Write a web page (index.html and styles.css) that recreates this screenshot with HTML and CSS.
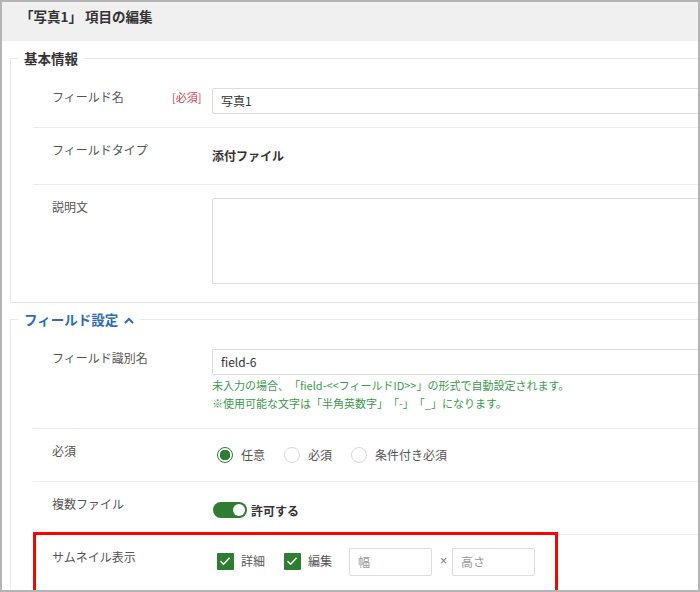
FILE: index.html
```html
<!DOCTYPE html>
<html lang="ja">
<head>
<meta charset="utf-8">
<title>「写真1」 項目の編集</title>
<link rel="stylesheet" href="styles.css">
</head>
<body>
<div class="frame">
  <div class="header">「写真1」 項目の編集</div>

  <fieldset class="group">
    <legend class="legend">基本情報</legend>
    <div class="row">
      <div class="label"><span class="label-text">フィールド名</span><span class="req">[必須]</span></div>
      <div class="control"><div class="input wide">写真1</div></div>
    </div>
    <div class="row">
      <div class="label"><span class="label-text">フィールドタイプ</span></div>
      <div class="control"><div class="static">添付ファイル</div></div>
    </div>
    <div class="row last">
      <div class="label"><span class="label-text">説明文</span></div>
      <div class="control"><div class="textarea"></div></div>
    </div>
  </fieldset>

  <fieldset class="group second">
    <legend class="legend blue">フィールド設定
      <svg class="chev" width="10" height="7" viewBox="0 0 10 7"><path d="M1 6 L5 2 L9 6" fill="none" stroke="#2d6db5" stroke-width="2"/></svg>
    </legend>
    <div class="row">
      <div class="label"><span class="label-text">フィールド識別名</span></div>
      <div class="control">
        <div class="input wide">field-6</div>
        <div class="help first">未入力の場合、「field-&lt;&lt;フィールドID&gt;&gt;」の形式で自動設定されます。</div>
        <div class="help last-help">※使用可能な文字は「半角英数字」「-」「_」になります。</div>
      </div>
    </div>
    <div class="row">
      <div class="label"><span class="label-text">必須</span></div>
      <div class="control options">
        <span class="opt"><span class="radio checked"></span>任意</span>
        <span class="opt"><span class="radio"></span>必須</span>
        <span class="opt"><span class="radio"></span>条件付き必須</span>
      </div>
    </div>
    <div class="row">
      <div class="label"><span class="label-text">複数ファイル</span></div>
      <div class="control options">
        <span class="toggle"><span class="knob"></span></span><span class="toggle-text">許可する</span>
      </div>
    </div>
    <div class="row last highlight">
      <div class="label"><span class="label-text">サムネイル表示</span></div>
      <div class="control options">
        <span class="opt"><span class="check"><svg width="16" height="16" viewBox="0 0 16 16"><path d="M3.5 8.2 L6.6 11.2 L12.6 4.8" fill="none" stroke="#fff" stroke-width="1.4"/></svg></span>詳細</span>
        <span class="opt"><span class="check"><svg width="16" height="16" viewBox="0 0 16 16"><path d="M3.5 8.2 L6.6 11.2 L12.6 4.8" fill="none" stroke="#fff" stroke-width="1.4"/></svg></span>編集</span>
        <span class="input small placeholder">幅</span>
        <span class="times">×</span>
        <span class="input small placeholder">高さ</span>
      </div>
      <div class="redbox"></div>
    </div>
  </fieldset>
</div>
</body>
</html>
```
FILE: styles.css
```css
* { box-sizing: border-box; }
html, body { margin: 0; padding: 0; background: #fff; }
body {
  font-family: "Noto Sans CJK JP", "Noto Sans", sans-serif;
  font-size: 12px;
  color: #444;
  text-spacing-trim: space-all;
}
.frame {
  width: 700px;
  height: 592px;
  border: 2px solid #b4b4b4;
  overflow: hidden;
  position: relative;
}
.header {
  height: 39px;
  background: #f0f0f0;
  padding: 5px 0 0 18px;
  font-size: 13.5px;
  font-weight: bold;
  line-height: 18px;
  color: #333;
}
.group {
  margin: 8px 0 0 8px;
  width: 740px;
  border: 1px solid #e8e8e8;
  padding: 8px 0 5px 22px;
  min-width: 0;
}
.group.second { margin-top: 7px; }
.legend {
  padding: 0 6px;
  margin-left: -15px;
  font-size: 13.5px;
  font-weight: bold;
  line-height: 18px;
  color: #333;
}
.legend.blue { color: #2d6db5; }
.chev { margin-left: 3px; vertical-align: 1px; }
.row {
  display: flex;
  align-items: flex-start;
  padding: 13px 0 13px 19px;
  border-bottom: 1px solid #ececec;
  position: relative;
}
.row.last { border-bottom: none; }
.label {
  width: 160px;
  flex: none;
  display: flex;
  line-height: 18px;
  color: #555;
}
.label-text { width: 120px; flex: none; }
.req {
  color: #d0404a;
  font-size: 11px;
}
.control { flex: 1; min-width: 0; }
.input {
  height: 26px;
  border: 1px solid #dcdcdc;
  border-radius: 2px;
  padding: 0 8px;
  line-height: 24px;
  color: #333;
  background: #fff;
}
.input.wide { width: 520px; }
.static {
  padding: 6px 0 6px;
  line-height: 18px;
  font-weight: bold;
  color: #333;
}
.textarea {
  width: 520px;
  height: 86px;
  border: 1px solid #dcdcdc;
  border-radius: 2px;
}
.help {
  color: #3a9a4e;
  font-size: 11px;
  line-height: 18px;
  white-space: nowrap;
}
.help.first { margin-top: 1px; }
.help.last-help { margin-bottom: 3px; }
.options {
  display: flex;
  align-items: center;
  height: 26px;
  color: #555;
}
.opt {
  display: inline-flex;
  align-items: center;
  margin-right: 19px;
  line-height: 18px;
}
.opt:first-child { margin-left: 5px; }
.radio {
  width: 16px;
  height: 16px;
  border-radius: 50%;
  border: 1px solid #d8d8d8;
  margin-right: 8px;
  background: #fff;
}
.radio.checked {
  border: 1.5px solid #2e7d32;
  background: radial-gradient(circle, #2e7d32 0 5px, #fff 5.5px);
}
.toggle {
  width: 34px;
  height: 16px;
  border-radius: 8px;
  background: #2e7d32;
  display: inline-flex;
  align-items: center;
  justify-content: flex-end;
  padding-right: 2px;
  margin-left: 1px;
  margin-top: 4px;
}
.knob {
  width: 12px;
  height: 12px;
  border-radius: 50%;
  background: #fff;
}
.toggle-text {
  font-weight: bold;
  color: #333;
  margin-left: 4px;
  margin-top: 4px;
}
.check {
  width: 17px;
  height: 17px;
  background: #2e7d32;
  border-radius: 1px;
  margin-right: 7px;
  display: inline-flex;
}
.highlight .opt { margin-right: 19px; }
.highlight .opt:nth-child(2) { margin-right: 17px; }
.input.small {
  width: 83px;
  height: 28px;
  line-height: 26px;
  margin-top: 2px;
}
.placeholder { color: #999; }
.times {
  font-family: "Liberation Sans", sans-serif;
  color: #777;
  margin: 0 5px 0 8px;
}
.redbox {
  position: absolute;
  left: 0;
  top: -3px;
  width: 525px;
  height: 62px;
  border: 3px solid #ff0000;
  pointer-events: none;
}
```
